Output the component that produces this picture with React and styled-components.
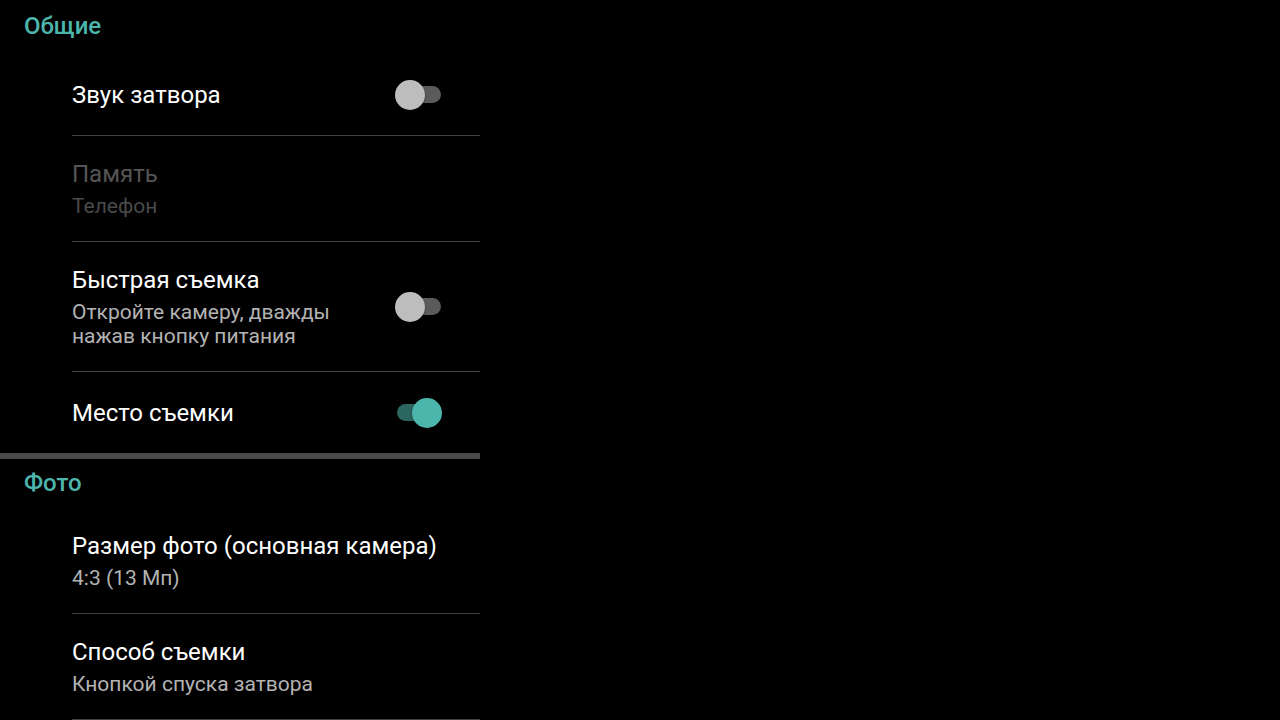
import React from "react";
import styled, { createGlobalStyle, css } from "styled-components";

const GlobalStyle = createGlobalStyle`
  html, body {
    margin: 0;
    padding: 0;
    background: #000000;
  }
  body {
    font-family: Roboto, "Noto Sans", "Liberation Sans", sans-serif;
    -webkit-font-smoothing: antialiased;
  }
`;

const Screen = styled.div`
  width: 1280px;
  height: 720px;
  overflow: hidden;
  background: #000000;
`;

const Panel = styled.div`
  width: 480px;
  padding-top: 2px;
`;

const Section = styled.section`
  ${(props) =>
    props.divided &&
    css`
      border-bottom: 6px solid #4a4a4a;
    `}
`;

const Header = styled.div`
  padding: 8px 24px ${(props) => (props.first ? "12px" : "9px")};
  font-size: 24px;
  line-height: 32px;
  font-weight: 500;
  color: #4db6ac;
`;

const Row = styled.div`
  padding-left: 72px;
`;

const RowBody = styled.div`
  display: flex;
  align-items: center;
  padding-right: 38px;
  min-height: ${(props) => (props.last ? "81px" : "82px")};
  box-sizing: border-box;
  border-bottom: ${(props) => (props.last ? "none" : "1px solid #404040")};
  ${(props) =>
    props.tall &&
    css`
      padding-top: 24px;
      padding-bottom: 23px;
    `}
`;

const Texts = styled.div`
  flex: 1;
  display: flex;
  flex-direction: column;
`;

const Title = styled.div`
  font-size: 24px;
  line-height: 28px;
  white-space: nowrap;
  color: ${(props) => (props.disabled ? "#555555" : "#ffffff")};
`;

const Summary = styled.div`
  margin-top: 6px;
  font-size: 21px;
  line-height: 24px;
  color: ${(props) => (props.disabled ? "#4a4a4a" : "#b3b3b3")};
`;

const SwitchBox = styled.div`
  position: relative;
  width: 47px;
  height: 30px;
  flex-shrink: 0;
  margin-left: 16px;
`;

const Track = styled.div`
  position: absolute;
  left: 2px;
  right: 1px;
  top: 6px;
  height: 17px;
  border-radius: 9px;
  background: ${(props) => (props.on ? "#2c6660" : "#5b5b5b")};
`;

const Thumb = styled.div`
  position: absolute;
  top: 0;
  left: ${(props) => (props.on ? "17px" : "0")};
  width: 30px;
  height: 30px;
  border-radius: 50%;
  background: ${(props) => (props.on ? "#4db6ac" : "#bdbdbd")};
  box-shadow: 0 1px 2px rgba(0, 0, 0, 0.5);
`;

const Switch = ({ on }) => (
  <SwitchBox>
    <Track on={on} />
    <Thumb on={on} />
  </SwitchBox>
);

const Preference = ({ title, summary, toggle, disabled, last }) => (
  <Row>
    <RowBody tall={!!summary} last={last}>
      <Texts>
        <Title disabled={disabled}>{title}</Title>
        {summary && <Summary disabled={disabled}>{summary}</Summary>}
      </Texts>
      {toggle !== undefined && <Switch on={toggle} />}
    </RowBody>
  </Row>
);

const App = () => {
  return (
    <>
      <GlobalStyle />
      <Screen>
        <Panel>
          <Section divided>
            <Header first>Общие</Header>
            <Preference title="Звук затвора" toggle={false} />
            <Preference title="Память" summary="Телефон" disabled />
            <Preference
              title="Быстрая съемка"
              summary="Откройте камеру, дважды нажав кнопку питания"
              toggle={false}
            />
            <Preference title="Место съемки" toggle={true} last />
          </Section>
          <Section>
            <Header>Фото</Header>
            <Preference
              title="Размер фото (основная камера)"
              summary="4:3 (13 Мп)"
            />
            <Preference title="Способ съемки" summary="Кнопкой спуска затвора" />
          </Section>
        </Panel>
      </Screen>
    </>
  );
};

export default App;
